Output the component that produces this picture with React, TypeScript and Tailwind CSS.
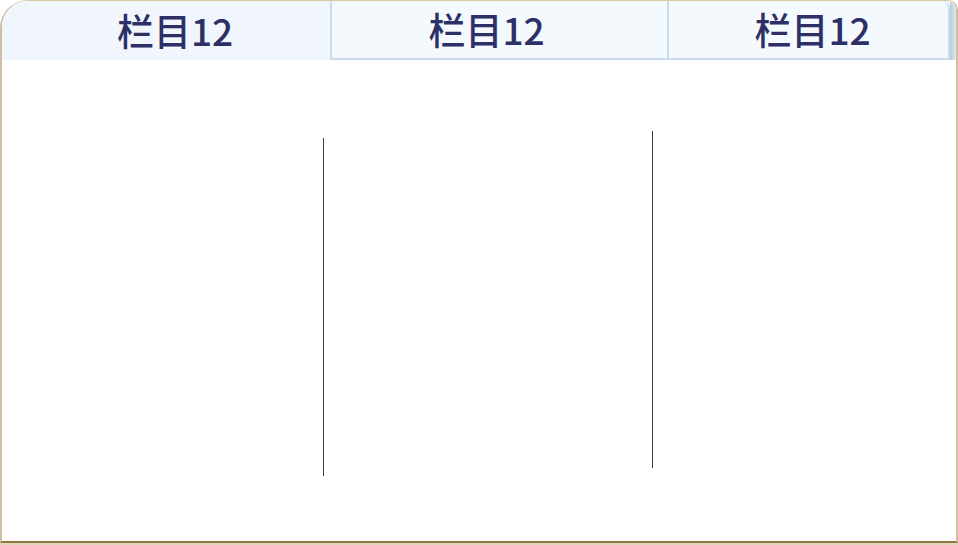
import React from 'react';

const tabs = ['栏目12', '栏目12', '栏目12'];

const App: React.FC = () => {
  return (
    <div className="w-[958px] h-[545px] bg-white flex flex-col overflow-hidden">
      <div className="flex-1 min-h-0 flex flex-col border-l-2 border-r-2 border-t border-b-2 border-l-[#cdbf9f] border-r-[#cdbf9f] border-t-[#d8c9a6] border-b-[#93773f] rounded-tl-[28px] rounded-tr-[10px] bg-white">
        {/* tab strip */}
        <div className="flex h-[59px] shrink-0 bg-[#f2f7fc] rounded-tl-[26px] rounded-tr-[10px] overflow-hidden">
          <div className="w-[328px] flex items-center justify-center pl-[18px] bg-[#f0f6fc]">
            <span className="text-[37px] leading-none font-medium text-[#2d3066] [font-family:'Noto_Sans_CJK_SC',sans-serif]">
              {tabs[0]}
            </span>
          </div>
          <div className="w-[339px] flex items-center justify-center pr-[26px] bg-[#f4f9fe] border-2 border-t-0 border-[#c9dced]">
            <span className="text-[37px] leading-none font-medium text-[#2d3066] [font-family:'Noto_Sans_CJK_SC',sans-serif]">
              {tabs[1]}
            </span>
          </div>
          <div className="flex-1 flex items-center justify-center pl-[8px] bg-[#f4f9fe] border-2 border-l-0 border-t-0 border-[#c9dced] rounded-tr-[8px]">
            <span className="text-[37px] leading-none font-medium text-[#2d3066] [font-family:'Noto_Sans_CJK_SC',sans-serif]">
              {tabs[2]}
            </span>
          </div>
          <div className="w-[6px] bg-gradient-to-r from-[#b7cadb] to-[#dfe8f0]" />
        </div>

        {/* body with column rules */}
        <div className="flex-1 flex">
          <div className="w-[321px]" />
          <div className="w-px mt-[78px] h-[338px] bg-[#3a3a3a]" />
          <div className="w-[328px]" />
          <div className="w-px mt-[71px] h-[337px] bg-[#3a3a3a]" />
        </div>
      </div>
      <div className="h-[2px] shrink-0 bg-[#e0d5bd]" />
    </div>
  );
};

export default App;
